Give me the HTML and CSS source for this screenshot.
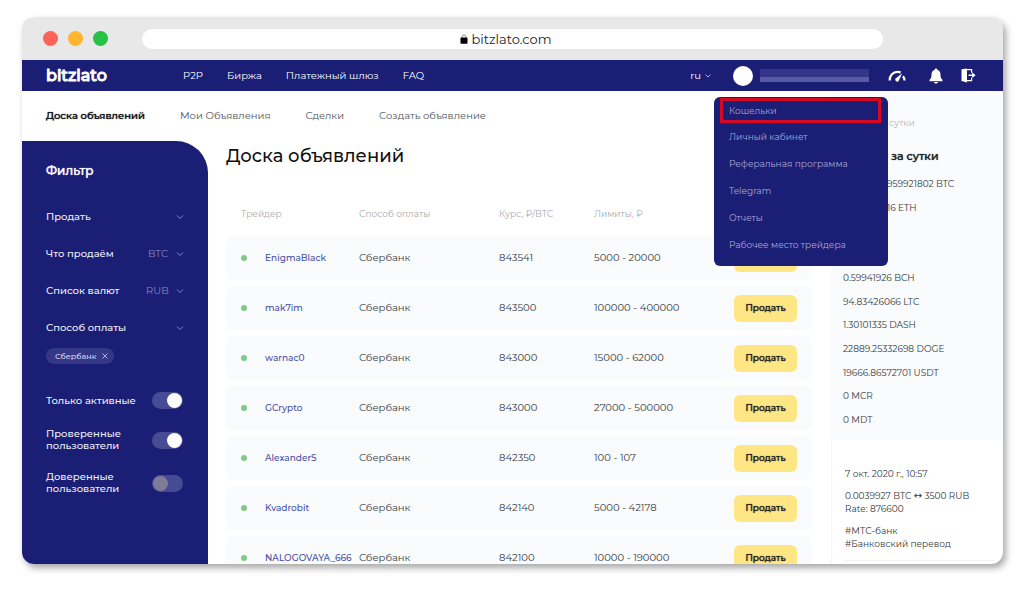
FILE: index.html
```html
<!DOCTYPE html>
<html lang="ru">
<head>
<meta charset="utf-8">
<meta name="viewport" content="width=device-width, initial-scale=1">
<title>Доска объявлений</title>
<link rel="stylesheet" href="styles.css">
</head>
<body>
<div class="window">
  <div class="chrome">
    <div class="dots"><span class="dot red"></span><span class="dot amber"></span><span class="dot green"></span></div>
    <div class="address">
      <svg class="lock" viewBox="0 0 8 10"><path d="M2 4V3a2 2 0 0 1 4 0v1" fill="none" stroke="#777" stroke-width="0.8"/><rect x="0.5" y="3.6" width="7" height="6.200" rx="0.8" fill="#000"/></svg>
      <span>bitzlato.com</span>
    </div>
  </div>

  <header class="topbar">
    <a class="logo" href="#">bitzlato</a>
    <nav class="primary">
      <a href="#">P2P</a>
      <a href="#">Биржа</a>
      <a href="#">Платежный шлюз</a>
      <a href="#">FAQ</a>
    </nav>
    <button class="lang" type="button">ru <svg class="chev" viewBox="0 0 8 6"><path d="M1.500 1.500 4 4l2.500-2.500"/></svg></button>
    <div class="user">
      <span class="avatar"></span>
      <span class="username"></span>
      <div class="menu">
        <a class="marked" href="#">Кошельки</a>
        <a href="#">Личный кабинет</a>
        <a href="#">Реферальная программа</a>
        <a href="#">Telegram</a>
        <a href="#">Отчеты</a>
        <a href="#">Рабочее место трейдера</a>
      </div>
    </div>
    <div class="tools">
      <button class="gauge" type="button" aria-label="Статистика"><svg width="18" height="14" viewBox="0 0 18 14"><path d="M1.600 11.500C1.600 6.500 5 2.800 9.500 2.800c1.200 0 2.200.2 3.200.7" fill="none" stroke="#fff" stroke-width="2.200"/><path d="M15 7.200c.9 1.100 1.500 2.400 1.500 4.300" fill="none" stroke="#fff" stroke-width="2.200"/><path d="M14.200 4.200 10.800 11.700A1.900 1.900 0 1 1 7.600 9.600Z" fill="#fff"/></svg></button>
      <button type="button" aria-label="Уведомления"><svg width="14" height="16" viewBox="0 0 14 16"><path d="M7 .5c.8 0 1.200.5 1.200 1.200C10.400 2.300 11.500 4 11.500 6.500c0 3 .7 4.300 2 5.300v1.400H.5v-1.400c1.300-1 2-2.300 2-5.300 0-2.500 1.100-4.200 3.300-4.800C5.800 1 6.200.5 7 .5ZM5 14h4c-.2 1-1 1.600-2 1.600S5.200 15 5 14Z" fill="#fff"/></svg></button>
      <button type="button" aria-label="Выход"><svg width="15" height="15" viewBox="0 0 15 15"><path d="M.5 1.200 6 .5v14L.5 13Z" fill="#fff"/><path d="M6 1.600h4.600v3.200M6 12.600h4.600V9.700" fill="none" stroke="#fff" stroke-width="1.200"/><path d="M7.500 6.400h3.700V4.300L14.600 7.200l-3.400 2.900V8H7.500Z" fill="#fff"/></svg></button>
    </div>
  </header>

  <div class="page">
    <div class="left">
      <nav class="tabs">
        <a class="active" href="#">Доска объявлений</a>
        <a href="#">Мои Объявления</a>
        <a href="#">Сделки</a>
        <a href="#">Создать объявление</a>
      </nav>
      <div class="content">
        <form class="filter">
          <h2>Фильтр</h2>
          <div class="field"><select class="wide" aria-label="Тип сделки"><option>Продать</option></select><svg class="chev" viewBox="0 0 8 6"><path d="M1 1.500 4 4.500l3-3"/></svg></div>
          <div class="field"><label for="coin">Что продаём</label><select id="coin"><option>BTC</option></select><svg class="chev" viewBox="0 0 8 6"><path d="M1 1.500 4 4.500l3-3"/></svg></div>
          <div class="field"><label for="currency">Список валют</label><select id="currency"><option>RUB</option></select><svg class="chev" viewBox="0 0 8 6"><path d="M1 1.500 4 4.500l3-3"/></svg></div>
          <button class="field last" type="button"><span>Способ оплаты</span><svg class="chev" viewBox="0 0 8 6"><path d="M1 1.500 4 4.500l3-3"/></svg></button>
          <button class="chip" type="button">Сбербанк <svg viewBox="0 0 6 6"><path d="M.5.5l5 5M5.500.5l-5 5"/></svg></button>
          <div class="switches">
            <label class="switch"><span>Только активные</span><input type="checkbox" checked></label>
            <label class="switch"><span>Проверенные пользователи</span><input type="checkbox" checked></label>
            <label class="switch"><span>Доверенные пользователи</span><input type="checkbox"></label>
          </div>
        </form>

        <main class="board">
          <h1>Доска объявлений</h1>
          <table>
            <colgroup><col class="c-trader"><col class="c-method"><col class="c-rate"><col class="c-limits"><col class="c-action"></colgroup>
            <thead><tr><th>Трейдер</th><th>Способ оплаты</th><th>Курс, ₽/BTC</th><th>Лимиты, ₽</th><th></th></tr></thead>
            <tbody>
              <tr><td><a href="#">EnigmaBlack</a></td><td>Сбербанк</td><td>843541</td><td>5000 - 20000</td><td><button type="button">Продать</button></td></tr>
              <tr><td><a href="#">mak7im</a></td><td>Сбербанк</td><td>843500</td><td>100000 - 400000</td><td><button type="button">Продать</button></td></tr>
              <tr><td><a href="#">warnac0</a></td><td>Сбербанк</td><td>843000</td><td>15000 - 62000</td><td><button type="button">Продать</button></td></tr>
              <tr><td><a href="#">GCrypto</a></td><td>Сбербанк</td><td>843000</td><td>27000 - 500000</td><td><button type="button">Продать</button></td></tr>
              <tr><td><a href="#">AlexanderS</a></td><td>Сбербанк</td><td>842350</td><td>100 - 107</td><td><button type="button">Продать</button></td></tr>
              <tr><td><a href="#">Kvadrobit</a></td><td>Сбербанк</td><td>842140</td><td>5000 - 42178</td><td><button type="button">Продать</button></td></tr>
              <tr><td><a href="#">NALOGOVAYA_666</a></td><td>Сбербанк</td><td>842100</td><td>10000 - 190000</td><td><button type="button">Продать</button></td></tr>
            </tbody>
          </table>
        </main>
      </div>
    </div>

    <aside class="stats">
      <section class="volumes">
        <p class="caption">сутки</p>
        <h3>за сутки</h3>
        <ul class="major"><li>959921802 BTC</li><li>16 ETH</li></ul>
        <ul class="minor">
          <li>0.59941926 BCH</li><li>94.83426066 LTC</li><li>1.30101335 DASH</li><li>22889.25332698 DOGE</li><li>19666.86572701 USDT</li><li>0 MCR</li><li>0 MDT</li>
        </ul>
      </section>
      <section class="deals">
        <article>
          <p>7 окт. 2020 г., 10:57</p>
          <p>0.0039927 BTC <span class="swap">↔</span> 3500 RUB<br>Rate: 876600</p>
          <p>#МТС-банк<br>#Банковский перевод</p>
        </article>
      </section>
    </aside>
  </div>
</div>
</body>
</html>
```
FILE: styles.css
```css
* { box-sizing: border-box; }
body {
  margin: 0;
  padding: 17px 21px 26px 22px;
  background: #fff;
  color: #343a40;
  font: 10px/14px Montserrat, Inter, "Noto Sans", sans-serif;
}
a { color: inherit; text-decoration: none; }
button, select { margin: 0; padding: 0; border: 0; background: none; color: inherit; font: inherit; }
h1, h2, h3, p, ul { margin: 0; padding: 0; }
ul { list-style: none; }

.window {
  display: flex;
  flex-direction: column;
  height: calc(100vh - 43px);
  overflow: hidden;
  border-radius: 12px;
  background: #fff;
  box-shadow: 3px 4px 7px rgba(0, 0, 0, .35);
}

.chrome {
  display: grid;
  grid-template-columns: 100px 1fr 100px;
  column-gap: 20px;
  align-items: center;
  flex: none;
  height: 43px;
  background: #e8e8e8;
}
.dots { display: flex; gap: 10px; padding-left: 21px; }
.dot { width: 15px; height: 15px; border-radius: 50%; }
.red { background: #ff6259; }
.amber { background: #ffb52e; }
.green { background: #28c244; }
.address {
  display: flex;
  align-items: center;
  justify-content: center;
  gap: 4px;
  height: 20px;
  padding-right: 14px;
  border-radius: 10px;
  background: #fff;
  color: #222;
  font-size: 13px;
}
.lock { width: 8px; height: 10px; }

.topbar {
  display: flex;
  align-items: center;
  flex: none;
  height: 31px;
  padding: 0 27px 0 24px;
  background: #1b1e75;
  color: #fff;
}
.logo { width: 137px; font-size: 16px; line-height: 20px; font-weight: 500; -webkit-text-stroke: 1px #fff; }
.primary { display: flex; gap: 24px; flex: 1; }
.chev { width: 8px; height: 6px; fill: none; stroke: #a9abd6; stroke-width: 1; }
.lang { display: flex; align-items: center; gap: 3px; margin-right: 21px; }
.user { position: relative; display: flex; align-items: center; gap: 7px; margin-right: 19px; }
.avatar { width: 20px; height: 20px; border-radius: 50%; background: #fff; }
.username { width: 109px; height: 13px; background: linear-gradient(#32358a 60%, #565ba3 60%); }
.tools { display: flex; align-items: center; gap: 18px; }
.tools button { display: flex; }
.tools .gauge { padding-right: 5px; }

.menu {
  position: absolute;
  top: 31px;
  left: -19px;
  z-index: 2;
  width: 174px;
  padding: 1px 7px 7px 6px;
  border-radius: 6px;
  background: #1b1e75;
  color: #a6a8d4;
  font-size: 9px;
}
.menu a { display: flex; align-items: center; height: 27px; padding-left: 9px; }
.menu .marked { height: 25px; margin-bottom: 1px; padding: 1px 0 0 6px; border: 3px solid #d40a24; }

.page { display: flex; flex: 1; min-height: 0; }
.left { display: flex; flex-direction: column; flex: 1; }
.tabs { display: flex; align-items: center; gap: 35px; flex: none; height: 50px; padding-left: 24px; color: #4c5156; }
.tabs .active { color: #111; font-weight: 500; }
.content { display: flex; flex: 1; min-height: 0; }

.tabs .active, .filter h2, .volumes h3, td button { text-shadow: 0 0 1px currentColor; }

.filter {
  width: 186px;
  padding: 23px 24px 0;
  border-top-right-radius: 32px;
  background: #1b1e75;
  color: #f0f0fa;
  font-weight: 500;
}
.filter h2 { margin-bottom: 25px; color: #fff; font-size: 12px; line-height: 14px; font-weight: 500; }
.field { display: flex; align-items: center; gap: 7px; width: 100%; height: 28px; margin-bottom: 9px; text-align: left; }
.field label, .field span { flex: 1; }
.field select { appearance: none; color: #8588c0; font-weight: 400; }
.field .wide { flex: 1; color: inherit; font-weight: 500; }
.field.last { margin-bottom: 6px; }
.filter .chev { stroke: #8487bf; }
.chip {
  display: flex;
  align-items: center;
  gap: 5px;
  height: 16px;
  padding: 0 6px 0 9px;
  border-radius: 8px;
  background: #343886;
  color: #d3d5ee;
  font-size: 8px;
  line-height: 16px;
}
.chip svg { width: 6px; height: 6px; stroke: #c9cbe8; fill: none; stroke-width: .8; }
.switches { display: grid; gap: 19px; padding: 28px 1px 0 0; }
.switch { display: flex; align-items: center; justify-content: space-between; line-height: 12px; }
.switch span { flex: 1; }
.switch input {
  appearance: none;
  flex: none;
  display: flex;
  align-items: center;
  width: 31px;
  height: 17px;
  margin: 0;
  border-radius: 9px;
  background: #474b93;
}
.switch input::before { content: ""; width: 15px; height: 15px; margin: 0 1px; border-radius: 50%; background: #7e7c98; }
.switch input:checked::before { margin-left: auto; background: #fff; }

.board { flex: 1; min-width: 0; padding: 3px 19px 0 18px; }
.board h1 { color: #111; font-size: 18px; line-height: 24px; font-weight: 500; }
table { width: 100%; margin-top: 24px; table-layout: fixed; border-collapse: separate; border-spacing: 0 6px; }
.c-trader { width: 133px; }
.c-method { width: 140px; }
.c-rate { width: 95px; }
.c-limits { width: 140px; }
.c-action { width: 78px; }
th { height: 32px; padding: 0; color: #a9abad; font-size: 9px; font-weight: 400; text-align: left; }
th:first-child { padding-left: 15px; }
td { height: 44px; padding: 0; background: #fafbfd; }
td:first-child { padding-left: 15px; border-radius: 6px 0 0 6px; white-space: nowrap; }
td:last-child { border-radius: 0 6px 6px 0; }
td a { display: flex; align-items: center; gap: 18px; color: #4650a8; font-size: 9px; font-weight: 500; }
td a::before { content: ""; width: 6px; height: 6px; border-radius: 50%; background: #7fca87; }
td button { display: block; width: 63px; height: 27px; border-radius: 6px; background: #ffe684; color: #222; font-size: 9px; font-weight: 500; }

.stats { display: flex; flex-direction: column; width: 172px; font-size: 9px; line-height: 14px; }
.volumes { padding: 25px 12px 13px; background: #f9fbfd; }
.caption { padding-left: 46px; color: #b4b6b8; }
.volumes h3 { margin-top: 19px; padding-left: 48px; color: #222; font-size: 11px; line-height: 14px; font-weight: 500; }
.volumes ul { display: flex; flex-direction: column; justify-content: space-between; }
.major { margin-top: 14px; padding-left: 44px; gap: 10px; }
.minor { min-height: 156px; margin-top: 56px; }
.deals { flex: 1; padding: 27px 9px 0 13px; border-left: 1px solid #f4f5f6; }
.deals article { padding-bottom: 10px; border-bottom: 1px solid #f1f1f3; }
.deals p { margin-bottom: 9px; line-height: 13px; }
.deals p:last-child { margin-bottom: 0; }
.swap { font-family: "DejaVu Sans", sans-serif; font-size: 10px; line-height: 10px; }
```
